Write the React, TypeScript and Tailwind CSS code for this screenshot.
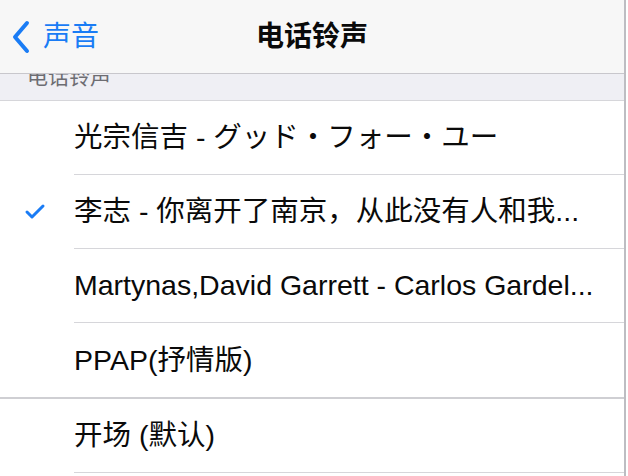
import { Check } from 'lucide-react';

const songs = [
  { title: '光宗信吉 - グッド・フォー・ユー', checked: false },
  { title: '李志 - 你离开了南京，从此没有人和我...', checked: true },
  { title: 'Martynas,David Garrett - Carlos Gardel...', checked: false },
  { title: 'PPAP(抒情版)', checked: false },
];

const font = { fontFamily: '"Liberation Sans", "Noto Sans CJK SC", sans-serif' };

const Row = ({ title, checked, last }: { title: string; checked?: boolean; last?: boolean }) => (
  <div className="flex h-[74px] items-stretch bg-white">
    <div className="flex w-[74px] shrink-0 items-center justify-center pr-[4px]">
      {checked && <Check className="h-[24px] w-[24px] text-[#1a7cf5]" strokeWidth={3} />}
    </div>
    <div className={last ? 'flex flex-1 items-center' : 'flex flex-1 items-center border-b border-[#d6d6da]'}>
      <span className="whitespace-nowrap text-[28.5px] leading-none text-[#0a0a0a]">{title}</span>
    </div>
  </div>
);

export default function App() {
  return (
    <div className="flex h-[476px] w-[628px] flex-col overflow-hidden bg-white" style={font}>
      <div className="flex h-full w-[626px] flex-col border-r-2 border-[#bdbdc2]">
        {/* nav bar */}
        <div className="z-10 grid h-[74px] shrink-0 grid-cols-[1fr_auto_1fr] items-center border-b border-[#c8c7cc] bg-[#f7f7f7]">
          <div className="flex items-center pl-[11px]">
            <svg width="20" height="34" viewBox="0 0 20 34" fill="none">
              <path d="M16 3 L4 17 L16 31" stroke="#1a7cf5" strokeWidth="4" strokeLinecap="round" strokeLinejoin="round" />
            </svg>
            <span className="ml-[12px] text-[28px] leading-none text-[#1a7cf5]">声音</span>
          </div>
          <span className="text-[28px] font-semibold leading-none text-[#0a0a0a]">电话铃声</span>
          <div />
        </div>

        {/* section header, partly scrolled under the nav */}
        <div className="h-[27px] shrink-0 overflow-hidden border-b border-[#d6d6da] bg-[#efeff4]">
          <div className="-mt-[11px] pl-[27px] text-[21px] leading-[28px] text-[#6d6d72]">电话铃声</div>
        </div>

        {songs.map((s, i) => (
          <Row key={i} title={s.title} checked={s.checked} last={i === songs.length - 1} />
        ))}

        <div className="h-[2px] shrink-0 bg-[#cfcfd3]" />
        <Row title="开场 (默认)" />
      </div>
    </div>
  );
}
